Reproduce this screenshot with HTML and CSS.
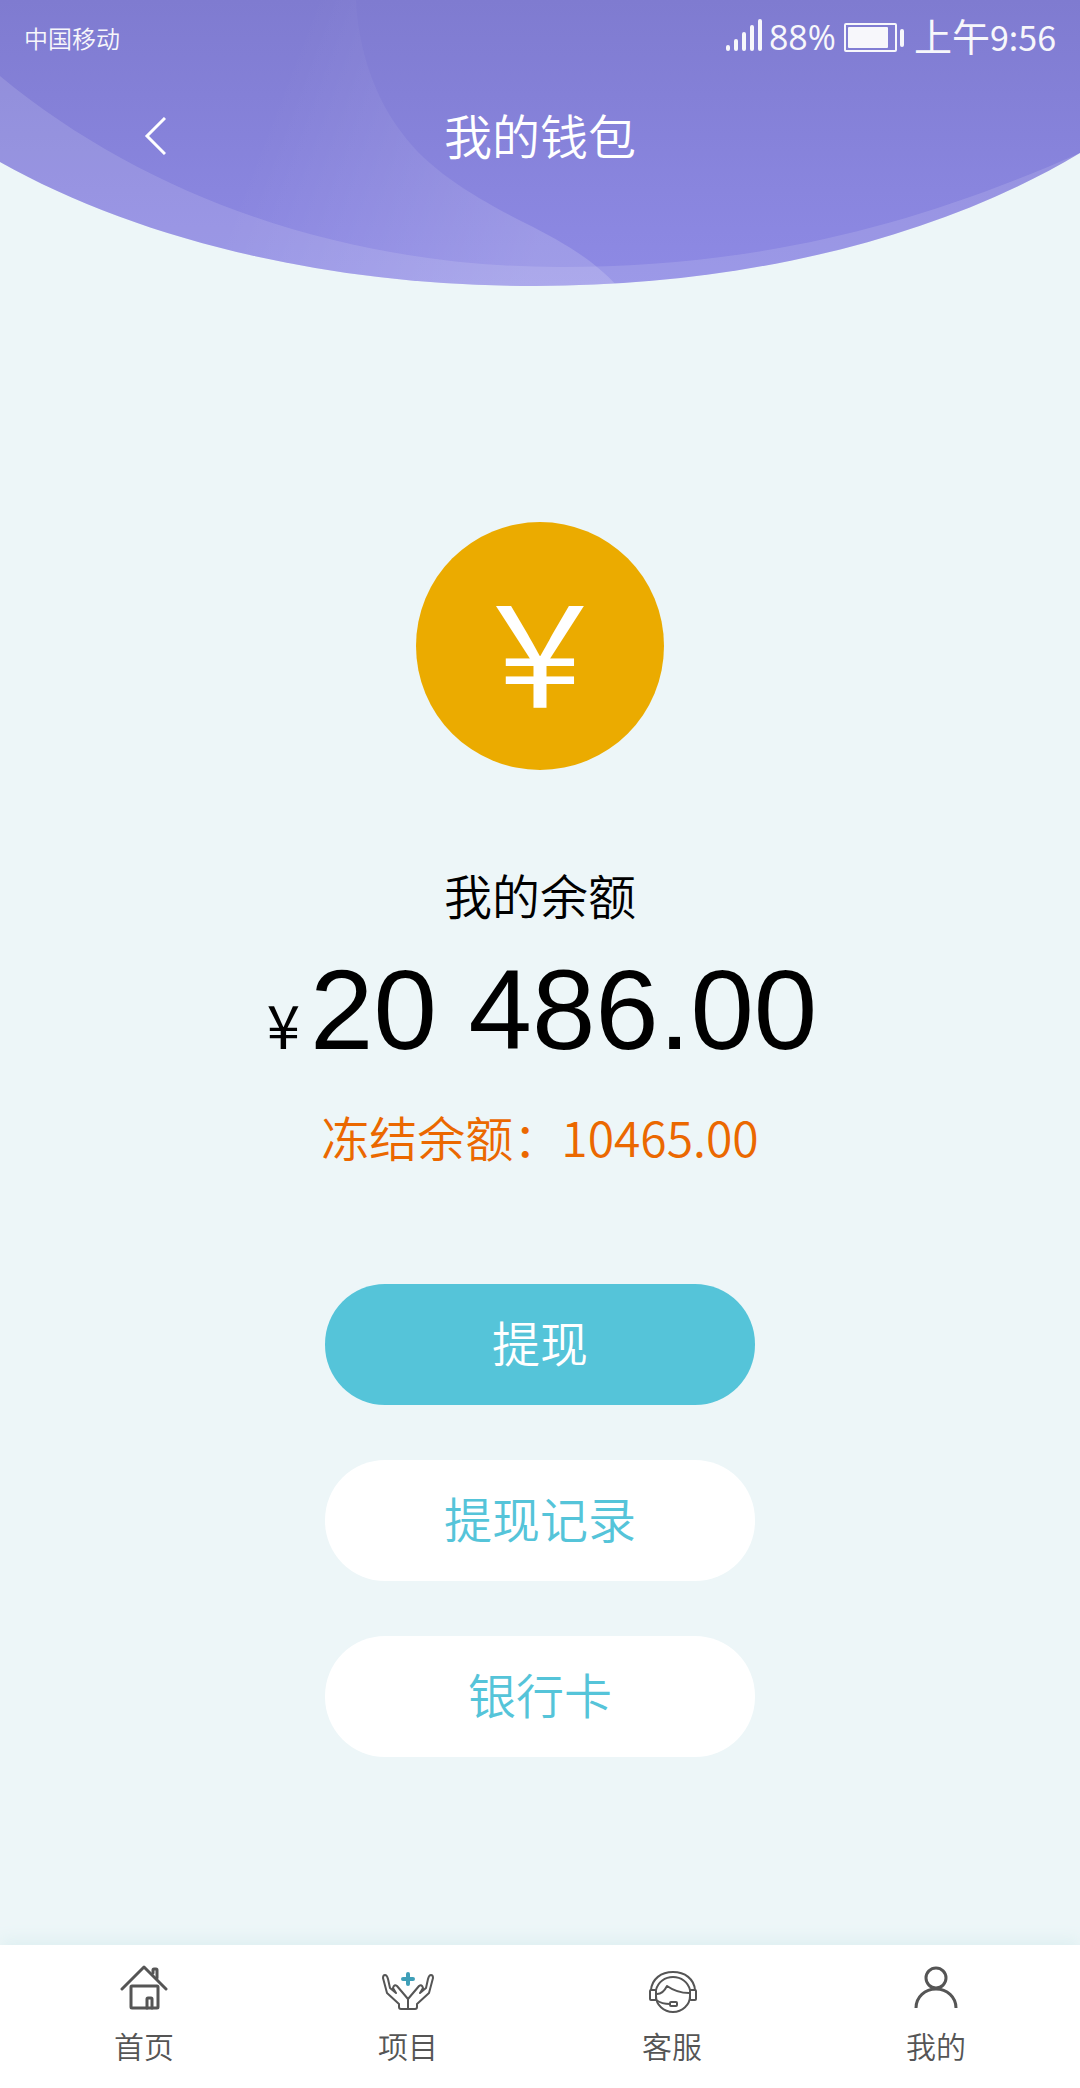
FILE: index.html
```
<!DOCTYPE html>
<html lang="zh-CN">
<head>
    <meta charset="UTF-8">
    <meta name="viewport" content="width=device-width, initial-scale=1.0">
    <title>我的钱包</title>
    <link rel="stylesheet" href="styles.css">
</head>
<body>
    <header class="header">
        <svg class="header-bg" viewBox="0 0 1080 286" preserveAspectRatio="none" aria-hidden="true">
            <defs>
                <linearGradient id="base" x1="0" y1="0" x2="0" y2="1">
                    <stop offset="0" stop-color="#7f7bd0"/>
                    <stop offset="1" stop-color="#8e8ae5"/>
                </linearGradient>
                <linearGradient id="wave" gradientUnits="userSpaceOnUse" x1="270" y1="110" x2="550" y2="220">
                    <stop offset="0" stop-color="#fff" stop-opacity="0"/>
                    <stop offset="1" stop-color="#fff" stop-opacity="0.16"/>
                </linearGradient>
                <clipPath id="shape">
                    <path d="M0 0H1080V153C940 237 745 286 535 286C330 286 138 240 0 162Z"/>
                </clipPath>
            </defs>
            <g clip-path="url(#shape)">
                <path fill="url(#base)" d="M0 0H1080V286H0Z"/>
                <!-- lighter rim under the inner curve -->
                <path fill="#fff" fill-opacity="0.13" d="M0 76C150 200 350 267 560 267C740 267 900 233 1080 153V286H0Z"/>
                <path fill="url(#wave)" d="M200 0H356C358 50 376 100 402 133C430 172 480 200 525 223C565 243 596 262 617 286H200Z"/>
            </g>
        </svg>

        <div class="status-bar">
            <span class="carrier">中国移动</span>
            <div class="status-right">
                <svg class="signal" width="37" height="32" viewBox="0 0 37 32" aria-hidden="true">
                    <rect x="0" y="26" width="4" height="6" rx="2"/>
                    <rect x="8" y="20" width="4" height="12" rx="2"/>
                    <rect x="16" y="13" width="4" height="19" rx="2"/>
                    <rect x="24" y="6" width="4" height="26" rx="2"/>
                    <rect x="32" y="0" width="4" height="32" rx="2"/>
                </svg>
                <span class="percent">88%</span>
                <svg class="battery" width="60" height="29" viewBox="0 0 60 29" aria-hidden="true">
                    <rect x="1" y="1" width="51" height="27" rx="1" fill="none" stroke="#f7f7fb" stroke-width="2"/>
                    <rect x="4" y="4" width="40" height="21" rx="1"/>
                    <rect x="56" y="6" width="4" height="18" rx="2"/>
                </svg>
                <span class="time">上午<span class="clock">9:56</span></span>
            </div>
        </div>

        <div class="title-bar">
            <a href="#" class="back" aria-label="返回">
                <svg width="22" height="38" viewBox="0 0 22 38" aria-hidden="true">
                    <path d="M21 1L3 19L21 37" fill="none" stroke="#fff" stroke-width="3"/>
                </svg>
            </a>
            <h1>我的钱包</h1>
        </div>
    </header>

    <main class="wallet">
        <div class="coin">￥</div>
        <h2>我的余额</h2>
        <p class="amount"><span class="currency">¥</span>20 486.00</p>
        <p class="frozen">冻结余额：10465.00</p>

        <div class="actions">
            <button type="button" class="btn btn-primary">提现</button>
            <button type="button" class="btn">提现记录</button>
            <button type="button" class="btn">银行卡</button>
        </div>
    </main>

    <nav class="tab-bar">
        <a href="#" class="tab">
            <svg width="52" height="48" viewBox="0 0 52 48" aria-hidden="true">
                <path d="M4 24L26 2L48 24"/>
                <path d="M35 8V5Q35 4 36 4H38Q39 4 39 5V13"/>
                <rect x="13" y="21" width="27" height="22" rx="1"/>
                <path d="M29 43V34Q29 33 30 33H33Q34 33 34 34V43"/>
            </svg>
            首页
        </a>
        <a href="#" class="tab">
            <svg class="thin" width="52" height="48" viewBox="0 0 52 48" aria-hidden="true">
                <path d="M26 44H19Q17 44 17 42V39L5 28L1 13Q1 10 3 10Q5 10 6 14L8 23L14 28L11 23Q12 19 15 21L26 34Z"/>
                <path d="M26 44H33Q35 44 35 42V39L47 28L51 13Q51 10 49 10Q47 10 46 14L44 23L38 28L41 23Q40 19 37 21L26 34Z"/>
                <path class="plus" d="M26 9V19M21 14H31"/>
            </svg>
            项目
        </a>
        <a href="#" class="tab">
            <svg class="thin" width="52" height="48" viewBox="0 0 52 48" aria-hidden="true">
                <path d="M5 25C6 14 15 7 27 7S48 14 49 25"/>
                <path d="M10 25C12 17 19 12 27 12S42 17 44 25"/>
                <rect x="4" y="25" width="6" height="10" rx="1"/>
                <rect x="44" y="25" width="6" height="10" rx="1"/>
                <path d="M10 29V31A17 16 0 0 0 44 31V29"/>
                <path d="M11 29Q17 29 21 21Q31 28 43 28"/>
                <path d="M10 35Q16 39 24 39"/>
                <rect x="24" y="37" width="7" height="4" rx="1"/>
            </svg>
            客服
        </a>
        <a href="#" class="tab">
            <svg class="bold" width="52" height="48" viewBox="0 0 52 48" aria-hidden="true">
                <circle cx="26" cy="13" r="10"/>
                <path d="M6 43C6 32 15 24 26 24S46 32 46 43"/>
            </svg>
            我的
        </a>
    </nav>
</body>
</html>
```

FILE: styles.css
```
* {
    box-sizing: border-box;
}
body {
    margin: 0;
    min-height: 100vh;
    display: flex;
    flex-direction: column;
    background-color: #edf6f8;
    color: #000;
    font-family: "Noto Sans CJK SC", sans-serif;
    font-weight: 350;
}
h1, h2, p {
    margin: 0;
    font-weight: 350;
}

/* Header */
.header {
    position: relative;
    height: 286px;
    color: #fff;
}
.header-bg {
    position: absolute;
    top: 0;
    left: 0;
    width: 100%;
    height: 100%;
}
.status-bar {
    position: relative;
    display: flex;
    justify-content: space-between;
    align-items: center;
    height: 74px;
    padding: 0 24px;
    color: #f7f7fb;
}
.carrier {
    font-size: 24px;
}
.status-right {
    display: flex;
    align-items: center;
    fill: #f7f7fb;
}
.signal {
    margin-right: 6px;
    margin-bottom: 4px;
}
.percent {
    font-family: "Open Sans", sans-serif;
    font-size: 34px;
    font-weight: 400;
    line-height: 40px;
}
.battery {
    margin: 0 10px 0 8px;
}
.time {
    padding-bottom: 2px;
    font-size: 38px;
    line-height: 40px;
    font-weight: 400;
}
.clock {
    font-size: 34px;
}
.title-bar {
    position: relative;
    display: flex;
    justify-content: center;
    align-items: center;
    height: 120px;
}
.title-bar h1 {
    font-size: 48px;
    line-height: 72px;
}
.back {
    position: absolute;
    left: 144px;
    display: flex;
    padding-top: 4px;
}

/* Balance */
.wallet {
    flex: 1;
    display: flex;
    flex-direction: column;
    align-items: center;
    padding: 236px 24px 188px;
}
.coin {
    display: flex;
    justify-content: center;
    align-items: center;
    width: 248px;
    height: 248px;
    border-radius: 50%;
    background-color: #ebab00;
    color: #fff;
    font-size: 140px;
    font-weight: 400;
}
.wallet h2 {
    margin-top: 88px;
    font-size: 48px;
    line-height: 72px;
}
.amount {
    margin-top: 14px;
    padding-left: 4px;
    font-family: "Liberation Sans", Arial, sans-serif;
    font-size: 114px;
    font-weight: 400;
    line-height: 132px;
}
.currency {
    margin-right: 10px;
    font-family: "Noto Sans CJK SC", sans-serif;
    font-size: 60px;
    line-height: 1;
}
.frozen {
    margin-top: 24px;
    color: #eb6800;
    font-size: 48px;
    line-height: 72px;
}
.actions {
    display: flex;
    flex-direction: column;
    gap: 55px;
    width: 430px;
    max-width: 100%;
    margin-top: 112px;
}
.btn {
    height: 121px;
    padding: 0 0 8px;
    border: none;
    border-radius: 60px;
    background-color: #fff;
    color: #55c4d9;
    font-family: inherit;
    font-size: 48px;
    font-weight: 350;
    cursor: pointer;
}
.btn-primary {
    background-color: #55c4d9;
    color: #fff;
}

/* Bottom tabs */
.tab-bar {
    display: flex;
    height: 143px;
    padding: 20px 12px 0;
    background-color: #fff;
    box-shadow: 0 -4px 16px #dceef0;
}
.tab {
    flex: 1;
    display: flex;
    flex-direction: column;
    align-items: center;
    gap: 10px;
    color: #555;
    font-size: 30px;
    line-height: 44px;
    text-decoration: none;
}
.tab svg {
    fill: none;
    stroke: #555;
    stroke-width: 3;
    stroke-linecap: round;
    stroke-linejoin: round;
}
.tab .thin {
    stroke-width: 2;
}
.tab .bold {
    stroke-linecap: butt;
}
.tab .plus {
    stroke: #3f9fb8;
    stroke-width: 4;
}
```
